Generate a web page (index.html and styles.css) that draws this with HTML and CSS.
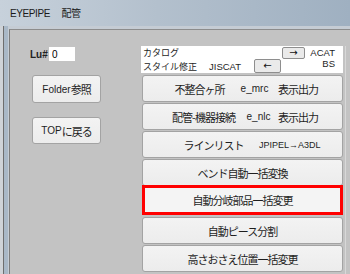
FILE: index.html
```html
<!DOCTYPE html>
<html lang="ja">
<head>
    <meta charset="UTF-8">
    <meta name="viewport" content="width=device-width, initial-scale=1.0">
    <title>EYEPIPE 配管</title>
    <link rel="stylesheet" href="styles.css">
</head>
<body>
    <div class="window">
        <div class="titlebar">
            <span class="app-name">EYEPIPE</span>
            <span class="doc-name">配管</span>
        </div>
        <div class="frame">
            <div class="client">
                <div class="left-col">
                    <div class="lu-row">
                        <label for="lu">Lu#</label>
                        <input type="text" id="lu" class="lu-input" value="0">
                    </div>
                    <button class="btn side-btn folder-btn"><span class="latin">Folder</span>参照</button>
                    <button class="btn side-btn top-btn"><span class="latin">TOP</span>に戻る</button>
                </div>

                <div class="right-col">
                    <div class="catalog">
                        <div class="catalog-text">
                            <div>カタログ</div>
                            <div>スタイル修正<span class="latin jis">JISCAT</span></div>
                        </div>
                        <button class="arrow arrow-left">←</button>
                        <button class="arrow arrow-right">→</button>
                        <div class="acat latin">
                            <div>ACAT</div>
                            <div>BS</div>
                        </div>
                    </div>

                    <button class="btn wide cols">
                        <span class="c1 w63">不整合ヶ所</span>
                        <span class="c2 w47 latin">e_mrc</span>
                        <span>表示出力</span>
                    </button>
                    <button class="btn wide cols">
                        <span class="c1 w71">配管-機器接続</span>
                        <span class="c2 w39 latin">e_nlc</span>
                        <span>表示出力</span>
                    </button>
                    <button class="btn wide cols">
                        <span class="c1 w91">ラインリスト</span>
                        <span class="latin small">JPIPEL→A3DL</span>
                    </button>
                    <button class="btn wide">ベンド自動一括変換</button>
                    <button class="btn wide marked">自動分岐部品一括変更</button>
                    <button class="btn wide">自動ピース分割</button>
                    <button class="btn wide">高さおさえ位置一括変更</button>
                </div>
                <div class="right-edge"></div>
            </div>
        </div>
    </div>
</body>
</html>
```

FILE: styles.css
```css
body {
    margin: 0;
    width: 350px;
    height: 274px;
    overflow: hidden;
    background-color: #c3c3c3;
    font-family: "Noto Sans CJK JP", "Liberation Sans", sans-serif;
    color: #1e1e1e;
}

.window {
    display: flex;
    flex-direction: column;
    height: 274px;
}

.titlebar {
    height: 26px;
    line-height: 25px;
    padding-left: 10px;
    font-family: "Liberation Sans", "Noto Sans CJK JP", sans-serif;
    font-size: 10px;
    letter-spacing: -0.4px;
    color: #1a1a1a;
    background: linear-gradient(to right, #c7d1db 0%, #b3c0cd 45%, #9fb0c1 100%);
}

.doc-name {
    margin-left: 9px;
    font-family: "Noto Sans CJK JP", sans-serif;
    font-size: 10px;
    letter-spacing: -0.5px;
}

.frame {
    flex: 1;
    display: flex;
    padding-top: 3px;
    padding-left: 9px;
    background: linear-gradient(to right, #cfd3d8 0 3px, #6e6e6e 3px 4px, #a9b8c7 4px 8px, #c5ccd4 8px 9px);
    background-color: #b9c5d1;
}

.client {
    flex: 1;
    display: flex;
    padding-top: 16px;
    background-color: #c3c3c3;
    border-top: 1px solid #8c8c8c;
    border-left: 1px solid #7d7d7d;
}

.latin {
    font-family: "Liberation Sans", sans-serif;
    letter-spacing: 0;
}

/* left column */
.left-col {
    width: 131px;
    display: flex;
    flex-direction: column;
    align-items: flex-start;
    padding-left: 20px;
    box-sizing: border-box;
}

.lu-row {
    display: flex;
    align-items: center;
    margin-top: 1px;
}

.lu-row label {
    width: 19px;
    font-family: "Liberation Sans", sans-serif;
    font-size: 10px;
    font-weight: bold;
    color: #222;
}

.lu-input {
    width: 26px;
    height: 14px;
    box-sizing: border-box;
    border: none;
    padding: 0 3px;
    font-family: "Liberation Sans", sans-serif;
    font-size: 10px;
    background: #fff;
}

.btn {
    display: flex;
    align-items: center;
    justify-content: center;
    padding: 0;
    box-sizing: border-box;
    background: linear-gradient(#f3f3f3, #ececec);
    border: 1px solid #a3a3a3;
    border-radius: 3px;
    font-family: "Noto Sans CJK JP", sans-serif;
    font-size: 11px;
    letter-spacing: -1px;
    color: #1e1e1e;
}

.btn .latin {
    font-size: 10px;
}

.side-btn {
    width: 69px;
    margin-left: 2px;
}

.folder-btn {
    height: 28px;
    margin-top: 14px;
}

.top-btn {
    height: 27px;
    margin-top: 14px;
}

/* right column */
.right-col {
    width: 202px;
    display: flex;
    flex-direction: column;
}

.catalog {
    height: 27px;
    display: flex;
    background: #fff;
    font-size: 9px;
    line-height: 13.5px;
}

.catalog-text {
    flex: 1;
    padding-left: 2px;
    letter-spacing: 0;
}

.jis {
    margin-left: 12px;
    font-size: 9.5px;
}

.arrow {
    padding: 0;
    box-sizing: border-box;
    background: #eaeaea;
    border: 1px solid #8e8e8e;
    border-radius: 2px;
    font-size: 10px;
    line-height: 10px;
    color: #111;
    font-family: "DejaVu Sans", sans-serif;
}

.arrow-left {
    width: 27px;
    height: 14px;
    align-self: flex-end;
    margin-right: 1px;
}

.arrow-right {
    width: 23px;
    height: 12px;
    align-self: flex-start;
    margin-top: 1px;
}

.acat {
    width: 30px;
    margin-right: 8px;
    text-align: right;
    font-size: 9.5px;
    line-height: 11px;
    padding-top: 1px;
}

.wide {
    width: 201px;
    height: 27px;
    margin-left: 1px;
    margin-top: 1px;
}

.catalog + .wide {
    margin-top: 2px;
}

.cols {
    justify-content: flex-start;
    padding-left: 25px;
}

.w63 { width: 63px; }
.w71 { width: 71px; }
.w47 { width: 47px; }
.w39 { width: 39px; }
.w91 { width: 91px; }

.btn .small {
    font-size: 9px;
}

.marked {
    height: 30px;
    margin-top: -1px;
    margin-bottom: 1px;
    border: 3px solid #ff0000;
    border-radius: 0;
    background: #f4f4f4;
}

.right-edge {
    width: 1px;
    margin-left: 2px;
    background: #d8d8d8;
}
```
